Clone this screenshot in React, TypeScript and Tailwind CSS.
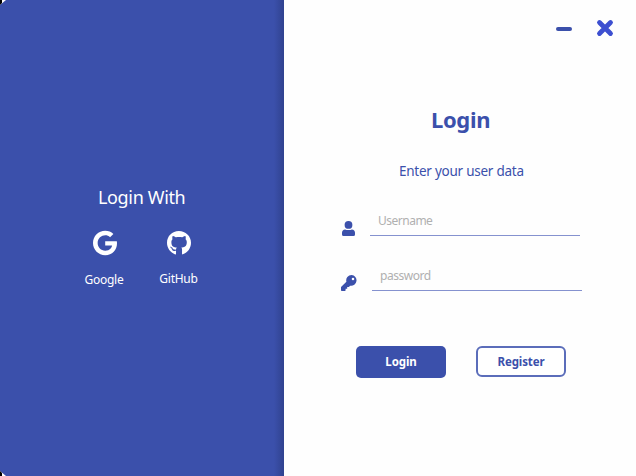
import { FaGithub, FaGoogle } from "react-icons/fa";

function UserIcon() {
  return (
    <svg viewBox="0 0 13 15" className="h-[15px] w-[13px]" fill="currentColor">
      <circle cx="6.5" cy="3.9" r="3.9" />
      <path d="M3.2 8.4C4.2 9.2 8.8 9.2 9.8 8.4 11.8 8.4 13 9.8 13 11.8V13.5Q13 15 11.5 15H1.5Q0 15 0 13.5V11.8C0 9.8 1.2 8.4 3.2 8.4Z" />
    </svg>
  );
}

function KeyIcon() {
  return (
    <svg viewBox="0 0 16 16" className="h-[16px] w-[16px]" fill="currentColor">
      <path
        fillRule="evenodd"
        d="M10.6 0A5.4 5.4 0 1 1 9.2 10.7L7.8 12H6.2V13.8H4.6V15.2Q4.6 16 3.8 16H.8Q0 16 0 15.2V12.3Q0 12 .3 11.7L5.4 6.8A5.4 5.4 0 0 1 10.6 0ZM12 2.7A1.3 1.3 0 1 0 12 5.3 1.3 1.3 0 0 0 12 2.7Z"
      />
    </svg>
  );
}

function WindowControls() {
  return (
    <div className="flex h-[56px] items-center justify-end gap-6 pr-[22px]">
      <button aria-label="Minimize" className="mt-[2px] h-[4px] w-[16px] rounded-full bg-[#3b50ab]" />
      <button aria-label="Close" className="h-[18px] w-[18px]">
        <svg viewBox="0 0 18 18" className="h-[18px] w-[18px]" fill="none" stroke="#3d4fd0" strokeWidth="4.8" strokeLinecap="round">
          <path d="M3.5 3.5 14.5 14.5M14.5 3.5 3.5 14.5" />
        </svg>
      </button>
    </div>
  );
}

function SocialPanel() {
  return (
    <aside className="relative flex w-[284px] shrink-0 flex-col bg-[#3b50ab] pt-[185px] text-white">
      <h2 className="h-6 pl-[98px] text-[18px] leading-6 tracking-[-0.35px] whitespace-nowrap">Login With</h2>
      <div className="flex pt-[21px] pl-[67px]">
        <button className="flex w-[76px] flex-col items-center">
          <FaGoogle className="h-[26px] w-[24px]" />
          <span className="mt-[15px] mr-[2px] text-[12px] leading-[18px] tracking-[-0.25px]">Google</span>
        </button>
        <button className="flex w-[71px] flex-col items-center">
          <FaGithub className="h-[26px] w-[24px]" />
          <span className="mt-[14px] text-[12px] leading-[18px] tracking-[-0.25px]">GitHub</span>
        </button>
      </div>
      <div className="absolute inset-y-0 right-0 w-[10px] bg-gradient-to-r from-transparent to-[#30428f]" />
      <svg className="absolute top-0 left-0 h-[5px] w-[6px]" viewBox="0 0 6 5">
        <path d="M0 0H6L0 5Z" fill="#fff" />
        <path d="M0 0H2V3L0 5Z" fill="#000" />
      </svg>
      <svg className="absolute bottom-0 left-0 h-[5px] w-[6px]" viewBox="0 0 6 5">
        <path d="M0 0 6 5H0Z" fill="#fff" />
        <path d="M0 0 2 2V5H0Z" fill="#000" />
      </svg>
    </aside>
  );
}

export default function App() {
  return (
    <main className="flex h-[476px] w-[636px] overflow-hidden bg-[#fefefe] font-['Noto_Sans','Open_Sans',sans-serif] text-[#3b50ab]">
      <SocialPanel />
      <section className="flex w-[352px] flex-col">
        <WindowControls />
        <h1 className="mt-[47px] h-8 pl-[147px] text-[22px] leading-8 font-bold tracking-[-0.35px]">Login</h1>
        <p className="mt-[26px] h-5 pl-[115px] text-[13.5px] leading-5 tracking-[-0.25px] whitespace-nowrap">Enter your user data</p>
        <div className="mt-[26px] flex h-[29px] items-end pl-[58px]">
          <UserIcon />
          <input
            placeholder="Username"
            className="ml-[15px] h-[29px] w-[210px] border-b border-[#8592cf] bg-transparent px-2 pb-[2px] text-[12px] tracking-[-0.5px] outline-none placeholder:text-[#b0b0b0]"
          />
        </div>
        <div className="mt-[26px] flex h-[29px] items-end pl-[57px]">
          <KeyIcon />
          <input
            type="password"
            placeholder="password"
            className="ml-[15px] h-[29px] w-[210px] border-b border-[#8592cf] bg-transparent px-2 pb-[2px] text-[12px] tracking-[-0.45px] outline-none placeholder:text-[#b0b0b0]"
          />
        </div>
        <div className="mt-[55px] flex items-start gap-[30px] pl-[72px] text-[11.5px] leading-5 font-bold tracking-[-0.1px]">
          <button className="h-[32px] w-[90px] rounded-[5px] bg-[#3b50ab] text-white">Login</button>
          <button className="h-[31px] w-[90px] rounded-[6px] border-2 border-[#5b6dba] bg-white">Register</button>
        </div>
      </section>
    </main>
  );
}
